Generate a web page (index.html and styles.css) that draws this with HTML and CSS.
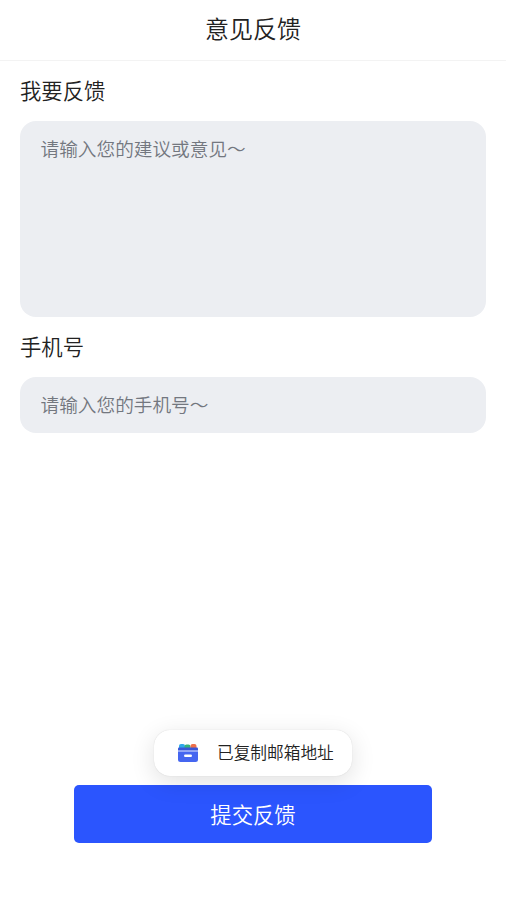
FILE: index.html
```html
<!DOCTYPE html>
<html lang="zh-CN">
<head>
    <meta charset="UTF-8">
    <meta name="viewport" content="width=device-width, initial-scale=1.0">
    <title>意见反馈</title>
    <link rel="stylesheet" href="styles.css">
</head>
<body>

    <div class="page">
        <div class="header">意见反馈</div>

        <div class="form">
            <div class="label">我要反馈</div>
            <textarea class="field field-big" placeholder="请输入您的建议或意见～"></textarea>
            <div class="label">手机号</div>
            <input class="field field-small" type="text" placeholder="请输入您的手机号～">
        </div>

        <div class="footer">
            <button class="submit">提交反馈</button>
        </div>

        <div class="toast">
            <svg class="toast-icon" width="22" height="20" viewBox="0 0 22 20">
                <rect x="2" y="1" width="6" height="6" rx="2" fill="#2fa8e8"/>
                <rect x="7.5" y="1.500" width="6" height="6" rx="2" fill="#35b27a"/>
                <rect x="13.5" y="1" width="6" height="6" rx="2" fill="#ef6f4a"/>
                <path d="M1 6h20v10.500a2.500 2.500 0 0 1-2.500 2.500h-15a2.500 2.500 0 0 1-2.500-2.500z" fill="#4566f0"/>
                <rect x="1" y="4.500" width="20" height="3" rx="1" fill="#3a56d8"/>
                <rect x="1" y="7.500" width="20" height="1" fill="#dfe6ff"/>
                <rect x="7" y="11.500" width="8" height="2.500" rx="1.200" fill="#ffffff"/>
            </svg>
            <span class="toast-text">已复制邮箱地址</span>
        </div>
    </div>

</body>
</html>
```

FILE: styles.css
```css
* {
    box-sizing: border-box;
}
body {
    margin: 0;
    background: #fff;
    font-family: "Noto Sans CJK SC", "Noto Sans", sans-serif;
    font-weight: 350;
    color: #222;
}
.page {
    position: relative;
    height: 900px;
    display: flex;
    flex-direction: column;
}
.header {
    height: 61px;
    padding-bottom: 4px;
    border-bottom: 1px solid #f3f3f3;
    display: flex;
    align-items: center;
    justify-content: center;
    font-size: 24px;
    line-height: 1;
}
.form {
    flex: 1;
    padding: 0 20px;
}
.label {
    height: 60px;
    padding-bottom: 2px;
    display: flex;
    align-items: center;
    font-size: 21.33px;
    line-height: 1;
}
.field {
    display: block;
    width: 100%;
    border: none;
    outline: none;
    background: #eceef2;
    border-radius: 16px;
    padding: 0 20.5px;
    font-family: inherit;
    font-weight: inherit;
    font-size: 18.67px;
    color: #222;
    resize: none;
}
.field::placeholder {
    color: #73777f;
    opacity: 1;
}
.field-big {
    height: 196px;
    padding-top: 13px;
    line-height: 28px;
}
.field-small {
    height: 56px;
    padding-bottom: 3px;
}
.footer {
    display: flex;
    justify-content: center;
    padding-bottom: 57px;
}
.submit {
    width: 358px;
    height: 58px;
    padding-bottom: 3px;
    border: none;
    border-radius: 5px;
    background: #2b55fe;
    color: #fff;
    font-family: inherit;
    font-weight: inherit;
    font-size: 21.33px;
}
.toast {
    position: absolute;
    left: 154px;
    top: 730px;
    width: 198px;
    height: 46px;
    display: flex;
    align-items: center;
    background: #fff;
    border-radius: 16px;
    box-shadow: 0 0 1px rgba(0, 0, 0, 0.18), 0 6px 24px rgba(0, 0, 0, 0.12);
}
.toast-icon {
    margin-left: 23px;
}
.toast-text {
    margin-left: 18px;
    padding-bottom: 2px;
    font-size: 16.7px;
    line-height: 1;
    white-space: nowrap;
}
```
